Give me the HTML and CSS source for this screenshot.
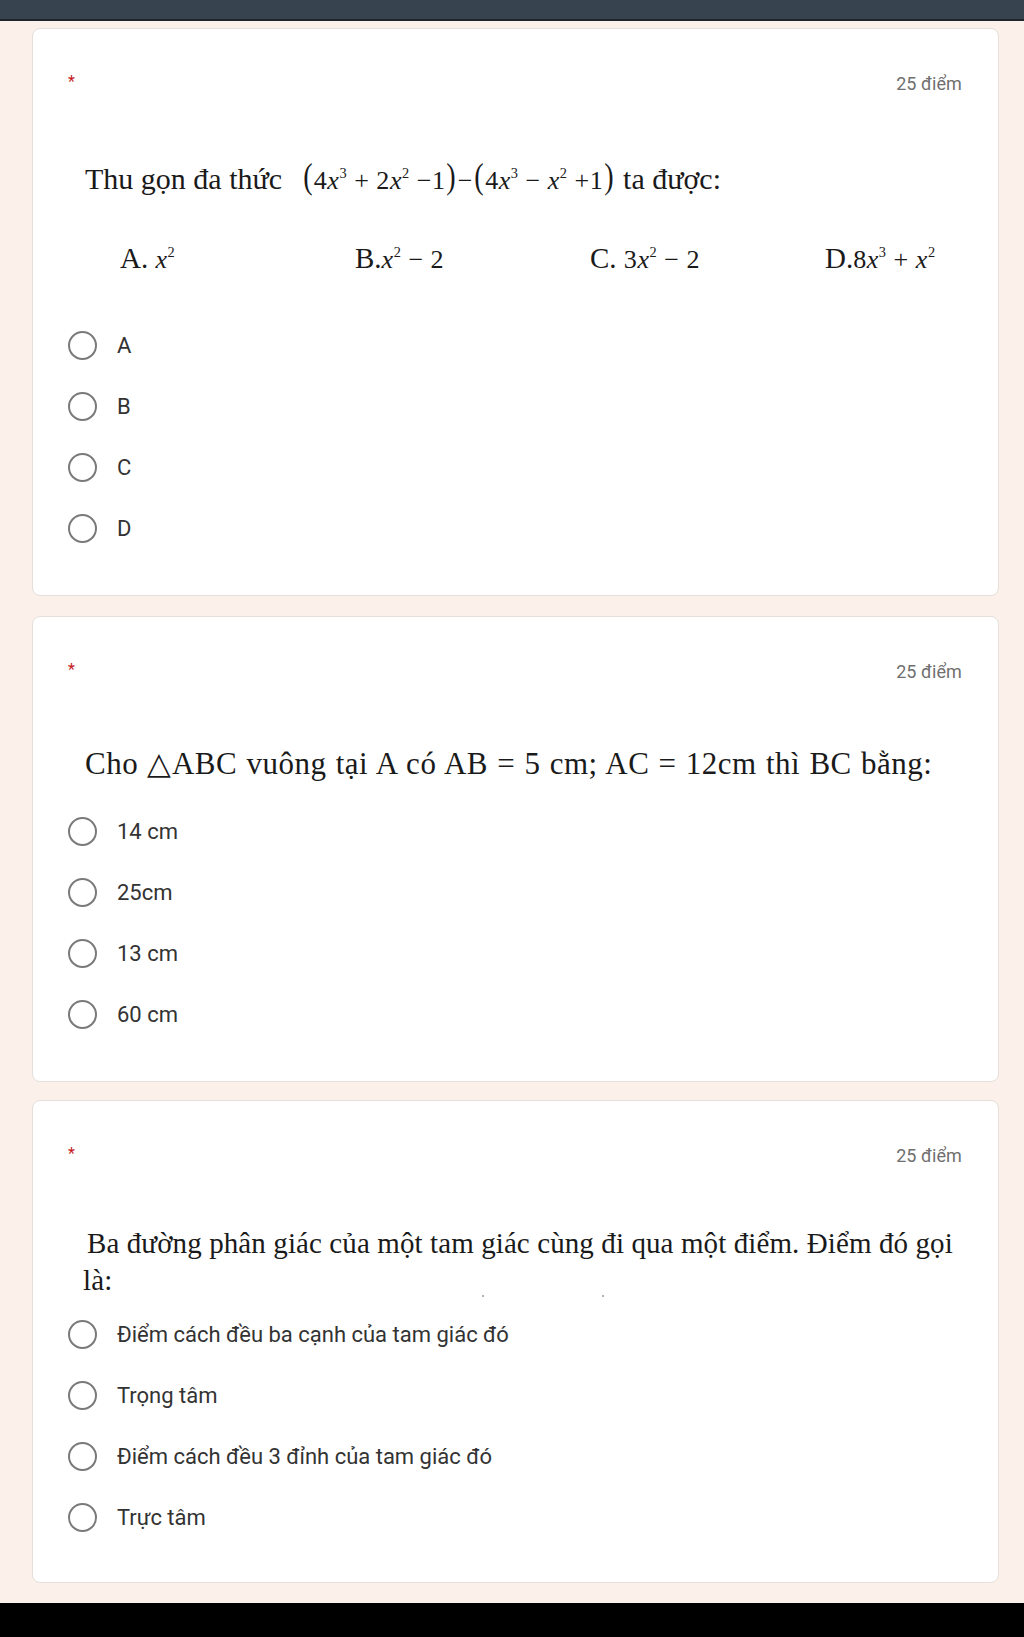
FILE: index.html
```html
<!DOCTYPE html>
<html lang="vi">
<head>
<meta charset="utf-8">
<title>Quiz</title>
<link rel="stylesheet" href="styles.css">
</head>
<body>
<div class="topbar"></div>
<main class="main">
  <section class="card c1">
    <div class="head"><span class="req">*</span><span class="pts">25 điểm</span></div>
    <div class="qtext q1">Thu gọn đa thức <span class="math lead"><span class="par">(</span>4<i>x</i><sup>3</sup> + 2<i>x</i><sup>2</sup> −1<span class="par">)</span>−<span class="par">(</span>4<i>x</i><sup>3</sup> − <i>x</i><sup>2</sup> +1<span class="par">)</span></span> ta được:</div>
    <div class="choices">
      <div class="ch">A. <span class="math"><i>x</i><sup>2</sup></span></div>
      <div class="ch">B.<span class="math"><i>x</i><sup>2</sup> − 2</span></div>
      <div class="ch">C. <span class="math">3<i>x</i><sup>2</sup> − 2</span></div>
      <div class="ch">D.<span class="math">8<i>x</i><sup>3</sup> + <i>x</i><sup>2</sup></span></div>
    </div>
    <div class="opts">
      <label class="opt"><span class="radio"></span><span class="lbl">A</span></label>
      <label class="opt"><span class="radio"></span><span class="lbl">B</span></label>
      <label class="opt"><span class="radio"></span><span class="lbl">C</span></label>
      <label class="opt"><span class="radio"></span><span class="lbl">D</span></label>
    </div>
  </section>

  <section class="card c2">
    <div class="head"><span class="req">*</span><span class="pts">25 điểm</span></div>
    <div class="qtext q2">Cho △ABC vuông tại A có AB = 5 cm; AC = 12cm thì BC bằng:</div>
    <div class="opts">
      <label class="opt"><span class="radio"></span><span class="lbl">14 cm</span></label>
      <label class="opt"><span class="radio"></span><span class="lbl">25cm</span></label>
      <label class="opt"><span class="radio"></span><span class="lbl">13 cm</span></label>
      <label class="opt"><span class="radio"></span><span class="lbl">60 cm</span></label>
    </div>
  </section>

  <section class="card c3">
    <div class="head"><span class="req">*</span><span class="pts">25 điểm</span></div>
    <div class="qtext q3"><span class="l1">Ba đường phân giác của một tam giác cùng đi qua một điểm. Điểm đó gọi</span><br>là:<span class="speck s1"></span><span class="speck s2"></span></div>
    <div class="opts">
      <label class="opt"><span class="radio"></span><span class="lbl">Điểm cách đều ba cạnh của tam giác đó</span></label>
      <label class="opt"><span class="radio"></span><span class="lbl">Trọng tâm</span></label>
      <label class="opt"><span class="radio"></span><span class="lbl">Điểm cách đều 3 đỉnh của tam giác đó</span></label>
      <label class="opt"><span class="radio"></span><span class="lbl">Trực tâm</span></label>
    </div>
  </section>
</main>
<div class="bottombar"></div>
</body>
</html>
```

FILE: styles.css
```css
* { box-sizing: border-box; margin: 0; padding: 0; }

body {
  width: 1024px;
  height: 1637px;
  overflow: hidden;
  background: #fbf0ea;
  font-family: Roboto, "Liberation Sans", sans-serif;
  display: flex;
  flex-direction: column;
}

.topbar {
  height: 21px;
  flex: none;
  background: #37434e;
  border-bottom: 2px solid #1e252b;
}

.main {
  flex: 1;
  display: flex;
  flex-direction: column;
  gap: 20px;
  padding: 7px 25px 0 32px;
}

.bottombar {
  height: 34px;
  flex: none;
  background: #000;
}

.card {
  background: #fff;
  border: 1px solid #e4dfdb;
  border-radius: 8px;
  padding: 40px 36px 34px 35px;
}

.c1 { padding-bottom: 36px; }
.c2 { padding-bottom: 36px; }
.c3 { margin-top: -2px; }

.head {
  height: 30px;
  display: flex;
  justify-content: space-between;
  align-items: flex-start;
}

.req {
  color: #c5221f;
  font-size: 16px;
  line-height: 16px;
  margin-top: 5px;
}

.pts {
  color: #6f6f6f;
  font-size: 18px;
  line-height: 30px;
  letter-spacing: 0.1px;
}

.qtext {
  font-family: "Liberation Serif", "Times New Roman", serif;
  color: #1a1a1a;
  padding-left: 17px;
  position: relative;
}

.q1 {
  margin-top: 60px;
  font-size: 30px;
  line-height: 40px;
}

.q1 .math { font-size: 0.87em; }

.q2 {
  margin-top: 57px;
  font-size: 31px;
  line-height: 40px;
  letter-spacing: 0.5px;
  word-spacing: 1px;
}

.q3 {
  margin-top: 54px;
  font-size: 29px;
  line-height: 37px;
  padding-left: 15px;
  letter-spacing: 0.1px;
}

.q3 .l1 { padding-left: 4px; }

.math {
  font-family: "Liberation Serif", "Times New Roman", serif;
  font-size: 0.9em;
  letter-spacing: 0.5px;
  white-space: nowrap;
}

.math.lead { margin-left: 12px; }

.math i { font-style: italic; }

.math sup {
  font-size: 0.55em;
  vertical-align: 0.75em;
  line-height: 0;
}

.par {
  display: inline-block;
  font-size: 1.35em;
  line-height: 0;
  transform: scaleX(0.8) translateY(-1px);
}

.choices {
  margin-top: 37px;
  display: grid;
  grid-template-columns: repeat(4, 235px);
  padding-left: 52px;
  font-family: "Liberation Serif", "Times New Roman", serif;
  font-size: 29px;
  line-height: 40px;
  color: #1a1a1a;
}

.opts {
  display: flex;
  flex-direction: column;
}

.c1 .opts { margin-top: 35px; }
.c2 .opts { margin-top: 17px; }
.c3 .opts { margin-top: 5px; }

.opt {
  height: 61px;
  display: flex;
  align-items: center;
  gap: 20px;
}

.radio {
  width: 29px;
  height: 29px;
  border: 2px solid #7a7a7a;
  border-radius: 50%;
  flex: none;
}

.lbl {
  font-size: 22px;
  color: #333;
}

.speck {
  position: absolute;
  top: 70px;
  width: 2px;
  height: 2px;
  border-radius: 50%;
  background: #9a9a9a;
}

.s1 { left: 414px; }
.s2 { left: 534px; }
```
